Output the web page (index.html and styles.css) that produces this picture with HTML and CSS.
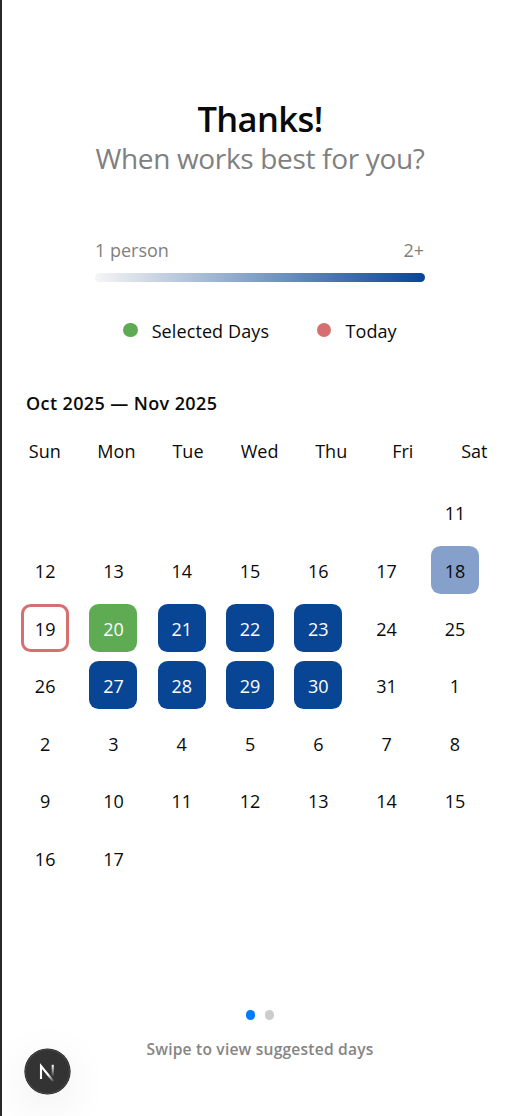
FILE: index.html
```html
<!DOCTYPE html>
<html lang="en">
<head>
  <meta charset="UTF-8">
  <meta name="viewport" content="width=device-width, initial-scale=1.0">
  <title>When works best for you?</title>
  <link rel="stylesheet" href="styles.css">
</head>
<body>
  <main class="page">
    <header class="heading">
      <h1>Thanks!</h1>
      <p>When works best for you?</p>
    </header>

    <section class="scale">
      <div class="scale-labels"><span>1 person</span><span>2+</span></div>
      <div class="scale-bar"></div>
    </section>

    <section class="legend">
      <div class="legend-item"><span class="dot green"></span><span>Selected Days</span></div>
      <div class="legend-item"><span class="dot red"></span><span>Today</span></div>
    </section>

    <h2 class="month">Oct 2025 — Nov 2025</h2>
    <div class="weekdays">
      <span>Sun</span><span>Mon</span><span>Tue</span><span>Wed</span><span>Thu</span><span>Fri</span><span>Sat</span>
    </div>
    <div class="days">
      <div class="day first">11</div>
      <div class="day">12</div>
      <div class="day">13</div>
      <div class="day">14</div>
      <div class="day">15</div>
      <div class="day">16</div>
      <div class="day">17</div>
      <div class="day some">18</div>
      <div class="day today">19</div>
      <div class="day selected">20</div>
      <div class="day full">21</div>
      <div class="day full">22</div>
      <div class="day full">23</div>
      <div class="day">24</div>
      <div class="day">25</div>
      <div class="day">26</div>
      <div class="day full">27</div>
      <div class="day full">28</div>
      <div class="day full">29</div>
      <div class="day full">30</div>
      <div class="day">31</div>
      <div class="day">1</div>
      <div class="day">2</div>
      <div class="day">3</div>
      <div class="day">4</div>
      <div class="day">5</div>
      <div class="day">6</div>
      <div class="day">7</div>
      <div class="day">8</div>
      <div class="day">9</div>
      <div class="day">10</div>
      <div class="day">11</div>
      <div class="day">12</div>
      <div class="day">13</div>
      <div class="day">14</div>
      <div class="day">15</div>
      <div class="day">16</div>
      <div class="day">17</div>
    </div>

    <footer class="pager">
      <div class="pager-dots"><span class="active"></span><span></span></div>
      <p>Swipe to view suggested days</p>
    </footer>
  </main>

  <button class="dev-badge" aria-label="Dev tools">
    <svg width="45" height="45" viewBox="0 0 45 45" fill="none">
      <defs>
        <linearGradient id="diag" x1="24" y1="25" x2="29.5" y2="32.5" gradientUnits="userSpaceOnUse">
          <stop stop-color="#fff"/>
          <stop offset="1" stop-color="#fff" stop-opacity="0"/>
        </linearGradient>
        <linearGradient id="stem" x1="0" y1="16" x2="0" y2="28" gradientUnits="userSpaceOnUse">
          <stop stop-color="#fff"/>
          <stop offset="1" stop-color="#fff" stop-opacity="0"/>
        </linearGradient>
      </defs>
      <path d="M16 30V17L28.5 32.5" stroke="url(#diag)" stroke-width="2.1"/>
      <rect x="26.7" y="15.8" width="2.1" height="12" fill="url(#stem)"/>
    </svg>
  </button>
</body>
</html>
```

FILE: styles.css
```css
* { box-sizing: border-box; }
body {
  margin: 0;
  background: #fff;
  color: #0a0a0a;
  font-family: "Open Sans", "Noto Sans", sans-serif;
  font-size: 18px;
  overflow: hidden;
}
h1, h2, p { margin: 0; }
.page {
  width: 518px;
  height: 1116px;
  padding-top: 99px;
  border-left: 2px solid #29292b;
}
.heading { text-align: center; }
.heading h1 {
  font-size: 34.5px;
  font-weight: 600;
  line-height: 40px;
  letter-spacing: -0.6px;
}
.heading p {
  font-size: 28px;
  line-height: 38px;
  letter-spacing: -0.33px;
  color: #808080;
}
.scale {
  width: 330px;
  margin: 60px auto 0;
}
.scale-labels {
  display: flex;
  justify-content: space-between;
  line-height: 26px;
  padding: 0 1px 0 0;
  color: #808080;
}
.scale-bar {
  height: 9.6px;
  margin-top: 9.8px;
  border-radius: 5px;
  background: linear-gradient(to right, #f5f5f5, #084595);
}
.legend {
  display: flex;
  justify-content: center;
  gap: 48px;
  margin-top: 34.6px;
  line-height: 28px;
}
.legend-item {
  display: flex;
  align-items: center;
  gap: 14px;
  letter-spacing: 0.1px;
}
.dot {
  width: 14.4px;
  height: 14.4px;
  margin-bottom: 2px;
  border-radius: 50%;
}
.green { background: #5fab54; }
.red { background: #d67070; }
.month {
  margin: 45px 0 0 24px;
  font-size: 18px;
  font-weight: 600;
  line-height: 26px;
  letter-spacing: 0.39px;
}
.weekdays {
  display: grid;
  grid-template-columns: repeat(7, 71.6px);
  margin: 22px 0 0 7px;
  line-height: 26px;
  text-align: center;
}
.days {
  display: grid;
  grid-template-columns: repeat(7, 68.3px);
  grid-auto-rows: 57.6px;
  justify-items: center;
  margin: 24.5px 0 0 9px;
}
.day {
  display: flex;
  align-items: center;
  justify-content: center;
  width: 48px;
  height: 48px;
  padding-top: 2px;
  border-radius: 9.6px;
}
.first { grid-column: 7; }
.some { background: #84a0cb; }
.full { background: #084595; color: #fff; }
.selected { background: #5fab54; color: #fff; }
.today { border: 3px solid #d67070; }
.pager {
  margin-top: 118.4px;
  text-align: center;
}
.pager-dots {
  display: flex;
  justify-content: center;
  gap: 9.6px;
}
.pager-dots span {
  width: 9.6px;
  height: 9.6px;
  border-radius: 50%;
  background: #ccc;
}
.pager-dots .active { background: #007aff; }
.pager p {
  margin-top: 17.2px;
  font-size: 15.6px;
  font-weight: 600;
  line-height: 24px;
  letter-spacing: 0.2px;
  color: #858585;
}
.dev-badge {
  position: fixed;
  left: 25px;
  bottom: 22px;
  width: 45px;
  height: 45px;
  padding: 0;
  border: 0;
  border-radius: 50%;
  background: #333;
  box-shadow: 0 0 0 0.6px #171717, inset 0 0 0 1px #484848, 0 12px 48px rgba(0, 0, 0, 0.09);
}
```
